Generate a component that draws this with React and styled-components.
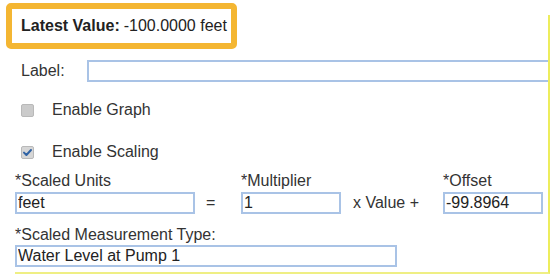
import React from 'react';
import styled, { createGlobalStyle } from 'styled-components';

const Global = createGlobalStyle`
  html, body { margin: 0; padding: 0; background: #ffffff; }
  body {
    font-family: "Liberation Sans", Arial, sans-serif;
    font-size: 16px;
    color: #333333;
  }
`;

const Page = styled.div`
  width: 558px;
  height: 278px;
  box-sizing: border-box;
  padding: 15px 0 0 15px;
`;

const Panel = styled.div`
  width: 535px;
  height: 259px;
  box-sizing: border-box;
  border-right: 2px solid #eded5c;
  border-bottom: 2px solid #efef84;
  display: flex;
  flex-direction: column;
  align-items: flex-start;
`;

const Highlight = styled.div`
  margin: -12px 0 0 -9px;
  width: 231px;
  height: 46px;
  box-sizing: border-box;
  border: 6px solid #f4b632;
  border-radius: 5px;
  padding-left: 9px;
  display: flex;
  align-items: center;
  line-height: 18px;
  color: #222222;
  white-space: nowrap;
`;

const Strong = styled.strong`
  font-weight: 700;
  margin-right: 4px;
`;

const LabelRow = styled.div`
  margin-top: 11px;
  align-self: stretch;
  display: flex;
  align-items: center;
  padding-left: 6px;
  height: 22px;
`;

const FieldLabel = styled.label`
  width: 66px;
  line-height: 18px;
`;

const TextInput = styled.input`
  box-sizing: border-box;
  height: 22px;
  width: ${p => (p.$w ? `${p.$w}px` : 'auto')};
  flex: ${p => (p.$grow ? 1 : 'none')};
  margin: 0;
  padding: 0 0 0 1px;
  border: 2px solid #a9c3e6;
  border-right-width: ${p => (p.$open ? 0 : 2)}px;
  border-radius: 0;
  background: #ffffff;
  font-family: "Liberation Sans", Arial, sans-serif;
  font-size: 16px;
  color: #222222;
  outline: none;
`;

const CheckRow = styled.div`
  margin-top: ${p => p.$top}px;
  height: 18px;
  display: flex;
  align-items: center;
  padding-left: 6px;
  line-height: 18px;
`;

const Box = styled.span`
  width: 13px;
  height: 13px;
  box-sizing: border-box;
  border: 1px solid #b9b9b9;
  border-radius: 2px;
  background: ${p => (p.$checked ? '#d6d6d6' : '#cbcbcb')};
  display: inline-flex;
  align-items: center;
  justify-content: center;
  margin-right: 18px;
`;

const ScaleGrid = styled.div`
  margin-top: 11px;
  display: grid;
  grid-template-columns: 180px 46px 100px 102px 100px;
  grid-template-rows: 18px 22px;
  row-gap: 2px;
  line-height: 18px;
`;

const ColLabel = styled.div`
  grid-row: 1;
  grid-column: ${p => p.$col};
  white-space: nowrap;
`;

const Op = styled.div`
  grid-row: 2;
  grid-column: ${p => p.$col};
  padding-left: ${p => p.$pad}px;
  display: flex;
  align-items: center;
  white-space: nowrap;
  color: #333333;
`;

const Cell = styled.div`
  grid-row: 2;
  grid-column: ${p => p.$col};
  display: flex;
`;

const TypeLabel = styled.div`
  margin-top: 12px;
  line-height: 18px;
  margin-bottom: 1px;
`;

function Check({ checked }) {
  return (
    <Box $checked={checked}>
      {checked && (
        <svg width="11" height="11" viewBox="0 0 11 11">
          <path d="M2 5.6 L4.4 8 L9 3" fill="none" stroke="#2f62a4" strokeWidth="2" strokeLinecap="round" strokeLinejoin="round" />
        </svg>
      )}
    </Box>
  );
}

export default function App() {
  return (
    <>
      <Global />
      <Page>
        <Panel>
          <Highlight>
            <Strong>Latest Value:</Strong>-100.0000 feet
          </Highlight>
          <LabelRow>
            <FieldLabel>Label:</FieldLabel>
            <TextInput $grow $open defaultValue="" />
          </LabelRow>
          <CheckRow $top={19}>
            <Check />
            Enable Graph
          </CheckRow>
          <CheckRow $top={24}>
            <Check checked />
            Enable Scaling
          </CheckRow>
          <ScaleGrid>
            <ColLabel $col={1}>*Scaled Units</ColLabel>
            <ColLabel $col={3}>*Multiplier</ColLabel>
            <ColLabel $col={5}>*Offset</ColLabel>
            <Cell $col={1}><TextInput $w={180} defaultValue="feet" /></Cell>
            <Op $col={2} $pad={11}>=</Op>
            <Cell $col={3}><TextInput $w={100} defaultValue="1" /></Cell>
            <Op $col={4} $pad={12}>x Value +</Op>
            <Cell $col={5}><TextInput $w={100} defaultValue="-99.8964" /></Cell>
          </ScaleGrid>
          <TypeLabel>*Scaled Measurement Type:</TypeLabel>
          <TextInput $w={382} defaultValue="Water Level at Pump 1" />
        </Panel>
      </Page>
    </>
  );
}
